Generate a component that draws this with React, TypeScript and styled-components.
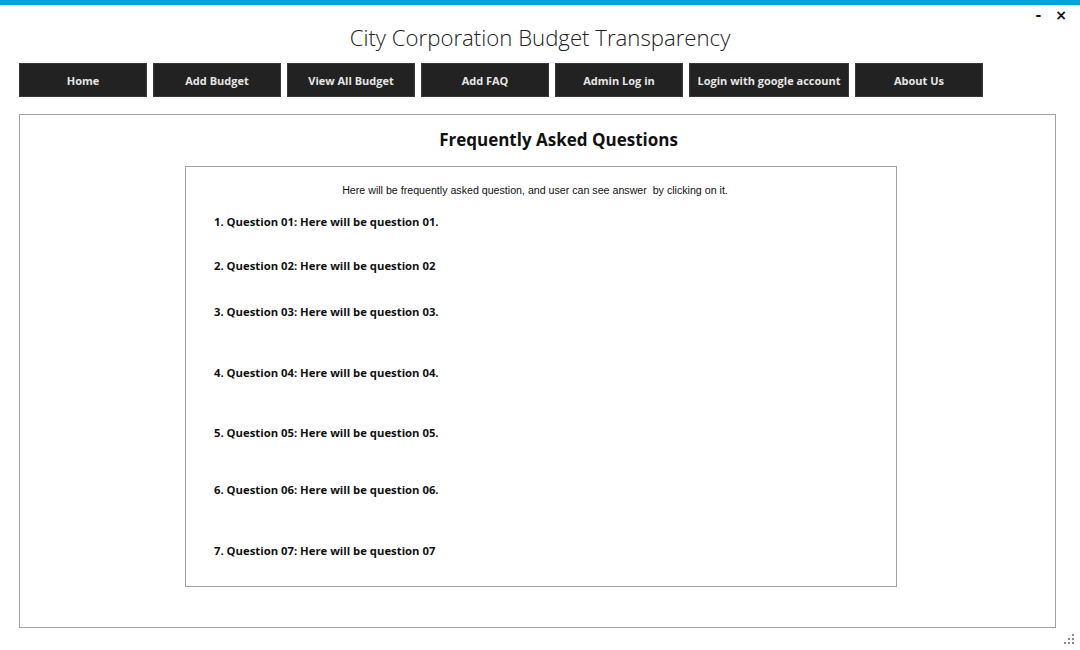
import React from "react";
import styled, { createGlobalStyle } from "styled-components";

const Global = createGlobalStyle`
  html, body { margin: 0; padding: 0; background: #ffffff; }
  body { font-family: "Open Sans", "Liberation Sans", sans-serif; width: 1080px; height: 650px; overflow: hidden; }
`;

const Window = styled.div`
  position: relative;
  width: 1080px;
  height: 650px;
  background: #ffffff;
`;

const Stripe = styled.div`
  height: 5px;
  background: #00a6d8;
`;

const Header = styled.header`
  height: 58px;
  display: flex;
  justify-content: center;
  align-items: flex-start;
`;

const Title = styled.h1`
  margin: 18px 0 0 0;
  font-family: "Open Sans", "Liberation Sans", sans-serif;
  font-weight: 300;
  font-size: 22.2px;
  line-height: 30px;
  color: #222222;
  letter-spacing: 0;
`;

const Controls = styled.div`
  position: absolute;
  top: 6px;
  right: 13px;
  display: flex;
  gap: 14px;
  align-items: center;
`;

const Ctl = styled.span`
  font-family: "DejaVu Sans", sans-serif;
  font-size: 14px;
  font-weight: 700;
  color: #111;
  line-height: 18px;
`;

const Nav = styled.nav`
  display: flex;
  gap: 6px;
  padding-left: 19px;
`;

const NavButton = styled.button<{ $w?: number }>`
  width: ${(p) => p.$w ?? 128}px;
  height: 34px;
  background: #222222;
  border: 1px solid #3a3a3a;
  color: #e6e6e6;
  font-family: "Open Sans", "Liberation Sans", sans-serif;
  font-weight: 700;
  font-size: 11px;
  padding: 0;
  cursor: pointer;
`;

const Panel = styled.section`
  margin: 17px 0 0 19px;
  width: 1035px;
  height: 512px;
  border: 1px solid #a0a0a0;
  box-sizing: content-box;
`;

const Heading = styled.h2`
  margin: 13px 0 0 0;
  padding-left: 42px;
  text-align: center;
  font-family: "Open Sans", "Liberation Sans", sans-serif;
  font-weight: 700;
  font-size: 17px;
  line-height: 24px;
  color: #111;
`;

const Inner = styled.div`
  margin: 14px 0 0 165px;
  width: 710px;
  height: 419px;
  border: 1px solid #a0a0a0;
  display: flex;
  flex-direction: column;
`;

const Intro = styled.p`
  margin: 16px 0 0 0;
  padding-right: 12px;
  text-align: center;
  font-family: "Liberation Sans", Arial, sans-serif;
  font-size: 10.65px;
  line-height: 14px;
  color: #111;
  white-space: pre;
`;

const Question = styled.div<{ $top: number }>`
  margin-top: ${(p) => p.$top}px;
  padding-left: 28px;
  font-family: "Open Sans", "Liberation Sans", sans-serif;
  font-weight: 700;
  font-size: 11.3px;
  line-height: 16px;
  color: #111;
`;

const Grip = styled.svg`
  position: absolute;
  right: 4px;
  bottom: 4px;
`;

const questions = [
  { text: "1. Question 01: Here will be question 01.", top: 17 },
  { text: "2. Question 02: Here will be question 02", top: 28 },
  { text: "3. Question 03: Here will be question 03.", top: 30 },
  { text: "4. Question 04: Here will be question 04.", top: 45 },
  { text: "5. Question 05: Here will be question 05.", top: 44 },
  { text: "6. Question 06: Here will be question 06.", top: 41 },
  { text: "7. Question 07: Here will be question 07", top: 45 },
];

const navItems: { label: string; w?: number }[] = [
  { label: "Home" },
  { label: "Add Budget" },
  { label: "View All Budget" },
  { label: "Add FAQ" },
  { label: "Admin Log in" },
  { label: "Login with google account", w: 160 },
  { label: "About Us" },
];

export default function App() {
  return (
    <Window>
      <Global />
      <Stripe />
      <Header>
        <Title>City Corporation Budget Transparency</Title>
      </Header>
      <Controls>
        <Ctl>-</Ctl>
        <Ctl>×</Ctl>
      </Controls>
      <Nav>
        {navItems.map((n) => (
          <NavButton key={n.label} $w={n.w}>
            {n.label}
          </NavButton>
        ))}
      </Nav>
      <Panel>
        <Heading>Frequently Asked Questions</Heading>
        <Inner>
          <Intro>Here will be frequently asked question, and user can see answer  by clicking on it.</Intro>
          {questions.map((q) => (
            <Question key={q.text} $top={q.top}>
              {q.text}
            </Question>
          ))}
        </Inner>
      </Panel>
      <Grip width="12" height="12" viewBox="0 0 12 12">
        <g fill="#8a8a8a">
          <rect x="8" y="0" width="2" height="2" />
          <rect x="4" y="4" width="2" height="2" />
          <rect x="8" y="4" width="2" height="2" />
          <rect x="0" y="8" width="2" height="2" />
          <rect x="4" y="8" width="2" height="2" />
          <rect x="8" y="8" width="2" height="2" />
        </g>
      </Grip>
    </Window>
  );
}
